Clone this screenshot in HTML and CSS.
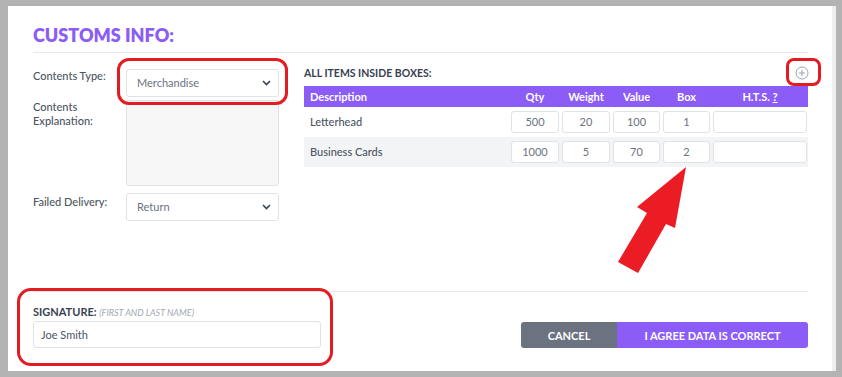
FILE: index.html
```html
<!DOCTYPE html>
<html>
<head>
    <meta charset="UTF-8">
    <title>Customs Info</title>
    <link rel="stylesheet" href="styles.css">
</head>
<body>

    <div class="panel">
        <div class="panel-head">
            <h1>CUSTOMS INFO:</h1>
        </div>

        <div class="panel-main">
            <!-- left: contents fields -->
            <div class="fields">
                <label class="field-label">Contents Type:</label>
                <div class="select">
                    <span>Merchandise</span>
                    <svg width="9" height="6" viewBox="0 0 9 6"><path d="M1 1 L4.5 4.5 L8 1" fill="none" stroke="#374151" stroke-width="1.6"/></svg>
                </div>

                <label class="field-label">Contents Explanation:</label>
                <div class="textarea"></div>

                <label class="field-label label-last">Failed Delivery:</label>
                <div class="select select-last">
                    <span>Return</span>
                    <svg width="9" height="6" viewBox="0 0 9 6"><path d="M1 1 L4.5 4.5 L8 1" fill="none" stroke="#374151" stroke-width="1.6"/></svg>
                </div>
            </div>

            <!-- right: items table -->
            <div class="items">
                <div class="items-title">
                    <span>ALL ITEMS INSIDE BOXES:</span>
                    <svg class="add-icon" width="14" height="14" viewBox="0 0 14 14">
                        <circle cx="7" cy="7" r="6" fill="none" stroke="#9ca3af" stroke-width="1"/>
                        <path d="M7 3.8 V10.2 M3.8 7 H10.2" stroke="#9ca3af" stroke-width="1"/>
                    </svg>
                </div>
                <div class="row row-head">
                    <div class="cell-desc">Description</div>
                    <div>Qty</div>
                    <div>Weight</div>
                    <div>Value</div>
                    <div>Box</div>
                    <div>H.T.S. <u>?</u></div>
                </div>
                <div class="row">
                    <div class="cell-desc">Letterhead</div>
                    <div class="box-input">500</div>
                    <div class="box-input">20</div>
                    <div class="box-input">100</div>
                    <div class="box-input">1</div>
                    <div class="box-input"></div>
                </div>
                <div class="row row-alt">
                    <div class="cell-desc">Business Cards</div>
                    <div class="box-input">1000</div>
                    <div class="box-input">5</div>
                    <div class="box-input">70</div>
                    <div class="box-input">2</div>
                    <div class="box-input"></div>
                </div>
            </div>
        </div>

        <div class="panel-foot">
            <div class="signature">
                <div class="sig-label">SIGNATURE: <em>(FIRST AND LAST NAME)</em></div>
                <div class="sig-input">Joe Smith</div>
            </div>
            <div class="actions">
                <button class="btn-cancel">CANCEL</button>
                <button class="btn-agree">I AGREE DATA IS CORRECT</button>
            </div>
        </div>
    </div>

    <!-- red annotation marks drawn over the screenshot -->
    <div class="mark mark-type"></div>
    <div class="mark mark-add"></div>
    <div class="mark mark-sig"></div>
    <svg class="arrow" width="842" height="377" viewBox="0 0 842 377">
        <polygon points="686,167 675,228 666,224 638,273 618,262 647,213 637,207" fill="#ec1c24"/>
    </svg>

</body>
</html>
```

FILE: styles.css
```css
body {
    margin: 0;
    background-color: #b3b3b3;
    font-family: "Lato", "Liberation Sans", sans-serif;
    font-size: 11px;
    line-height: 14px;
    color: #4b5563;
    position: relative;
    width: 842px;
    height: 377px;
    overflow: hidden;
}
.panel {
    margin: 6px 0 0 8px;
    width: 775px;
    height: 365px;
    background: white;
    border-right: 4px solid #eeeeee;
    padding: 0 24px 0 25px;
    display: flex;
    flex-direction: column;
}
.panel-head {
    padding: 18px 0 6px;
    border-bottom: 1px solid #e5e7eb;
}
h1 {
    margin: 0;
    font-size: 18px;
    line-height: 22px;
    font-weight: 800;
    color: #8b5cf6;
}

.panel-main {
    flex: 1;
    display: flex;
    gap: 25px;
}

/* left column */
.fields {
    width: 246px;
    padding-top: 16px;
    display: grid;
    grid-template-columns: 93px 153px;
    grid-auto-rows: min-content;
    row-gap: 3px;
}
.field-label {
    font-weight: 500;
    color: #4b5563;
}
.label-last {
    padding-top: 6px;
}
.select {
    height: 28px;
    box-sizing: border-box;
    border: 1px solid #dfe2e6;
    border-radius: 3px;
    padding: 0 7px 0 10px;
    display: flex;
    align-items: center;
    justify-content: space-between;
    color: #6b7280;
}
.select-last {
    margin-top: 4px;
}
.textarea {
    height: 86px;
    box-sizing: border-box;
    border: 1px solid #dfe2e6;
    border-radius: 3px;
    background: #f7f7f8;
}

/* right column */
.items {
    flex: 1;
    padding-top: 13px;
}
.items-title {
    display: flex;
    justify-content: space-between;
    align-items: center;
    height: 14px;
    margin-bottom: 6px;
    font-size: 10.5px;
    font-weight: 700;
    color: #374151;
}
.add-icon {
    margin-right: -1px;
}
.row {
    display: grid;
    grid-template-columns: 1fr 48px 48px 47px 47px 94px;
    column-gap: 3px;
    padding-right: 1px;
    height: 30px;
    align-items: center;
    text-align: center;
}
.row-head {
    height: 21px;
    background: #8b5cf6;
    color: white;
    font-weight: 700;
}
.row-alt {
    background: #f3f4f6;
}
.cell-desc {
    text-align: left;
    padding-left: 6px;
    font-weight: 500;
}
.row-head .cell-desc {
    font-weight: 700;
}
.box-input {
    height: 22px;
    line-height: 20px;
    box-sizing: border-box;
    border: 1px solid #dfe2e6;
    border-radius: 3px;
    background: white;
    color: #6b7280;
}

/* footer */
.panel-foot {
    border-top: 1px solid #e5e7eb;
    padding: 13px 0 23px;
    display: flex;
    justify-content: space-between;
    align-items: flex-end;
}
.signature {
    width: 288px;
}
.sig-label {
    font-weight: 700;
    color: #374151;
    margin-bottom: 1px;
}
.sig-label em {
    font-weight: 400;
    font-size: 9px;
    color: #a3a9b3;
}
.sig-input {
    height: 27px;
    box-sizing: border-box;
    border: 1px solid #dfe2e6;
    border-radius: 3px;
    padding-left: 7px;
    line-height: 25px;
    color: #4b5563;
}
.actions {
    display: flex;
}
.actions button {
    height: 26px;
    border: none;
    color: white;
    font-family: inherit;
    font-size: 11px;
    font-weight: 700;
    padding: 0;
}
.btn-cancel {
    width: 96px;
    background: #6b7280;
    border-radius: 3px 0 0 3px;
}
.btn-agree {
    width: 191px;
    background: #8b5cf6;
    border-radius: 0 3px 3px 0;
}

/* annotation overlays */
.mark {
    position: absolute;
    border: 3px solid #e31b23;
    border-radius: 12px;
    box-sizing: border-box;
}
.mark-type {
    left: 117px;
    top: 58px;
    width: 171px;
    height: 47px;
}
.mark-add {
    left: 786px;
    top: 58px;
    width: 35px;
    height: 28px;
    border-radius: 8px;
}
.mark-sig {
    left: 17px;
    top: 288px;
    width: 316px;
    height: 78px;
    border-radius: 14px;
}
.arrow {
    position: absolute;
    left: 0;
    top: 0;
}
```
